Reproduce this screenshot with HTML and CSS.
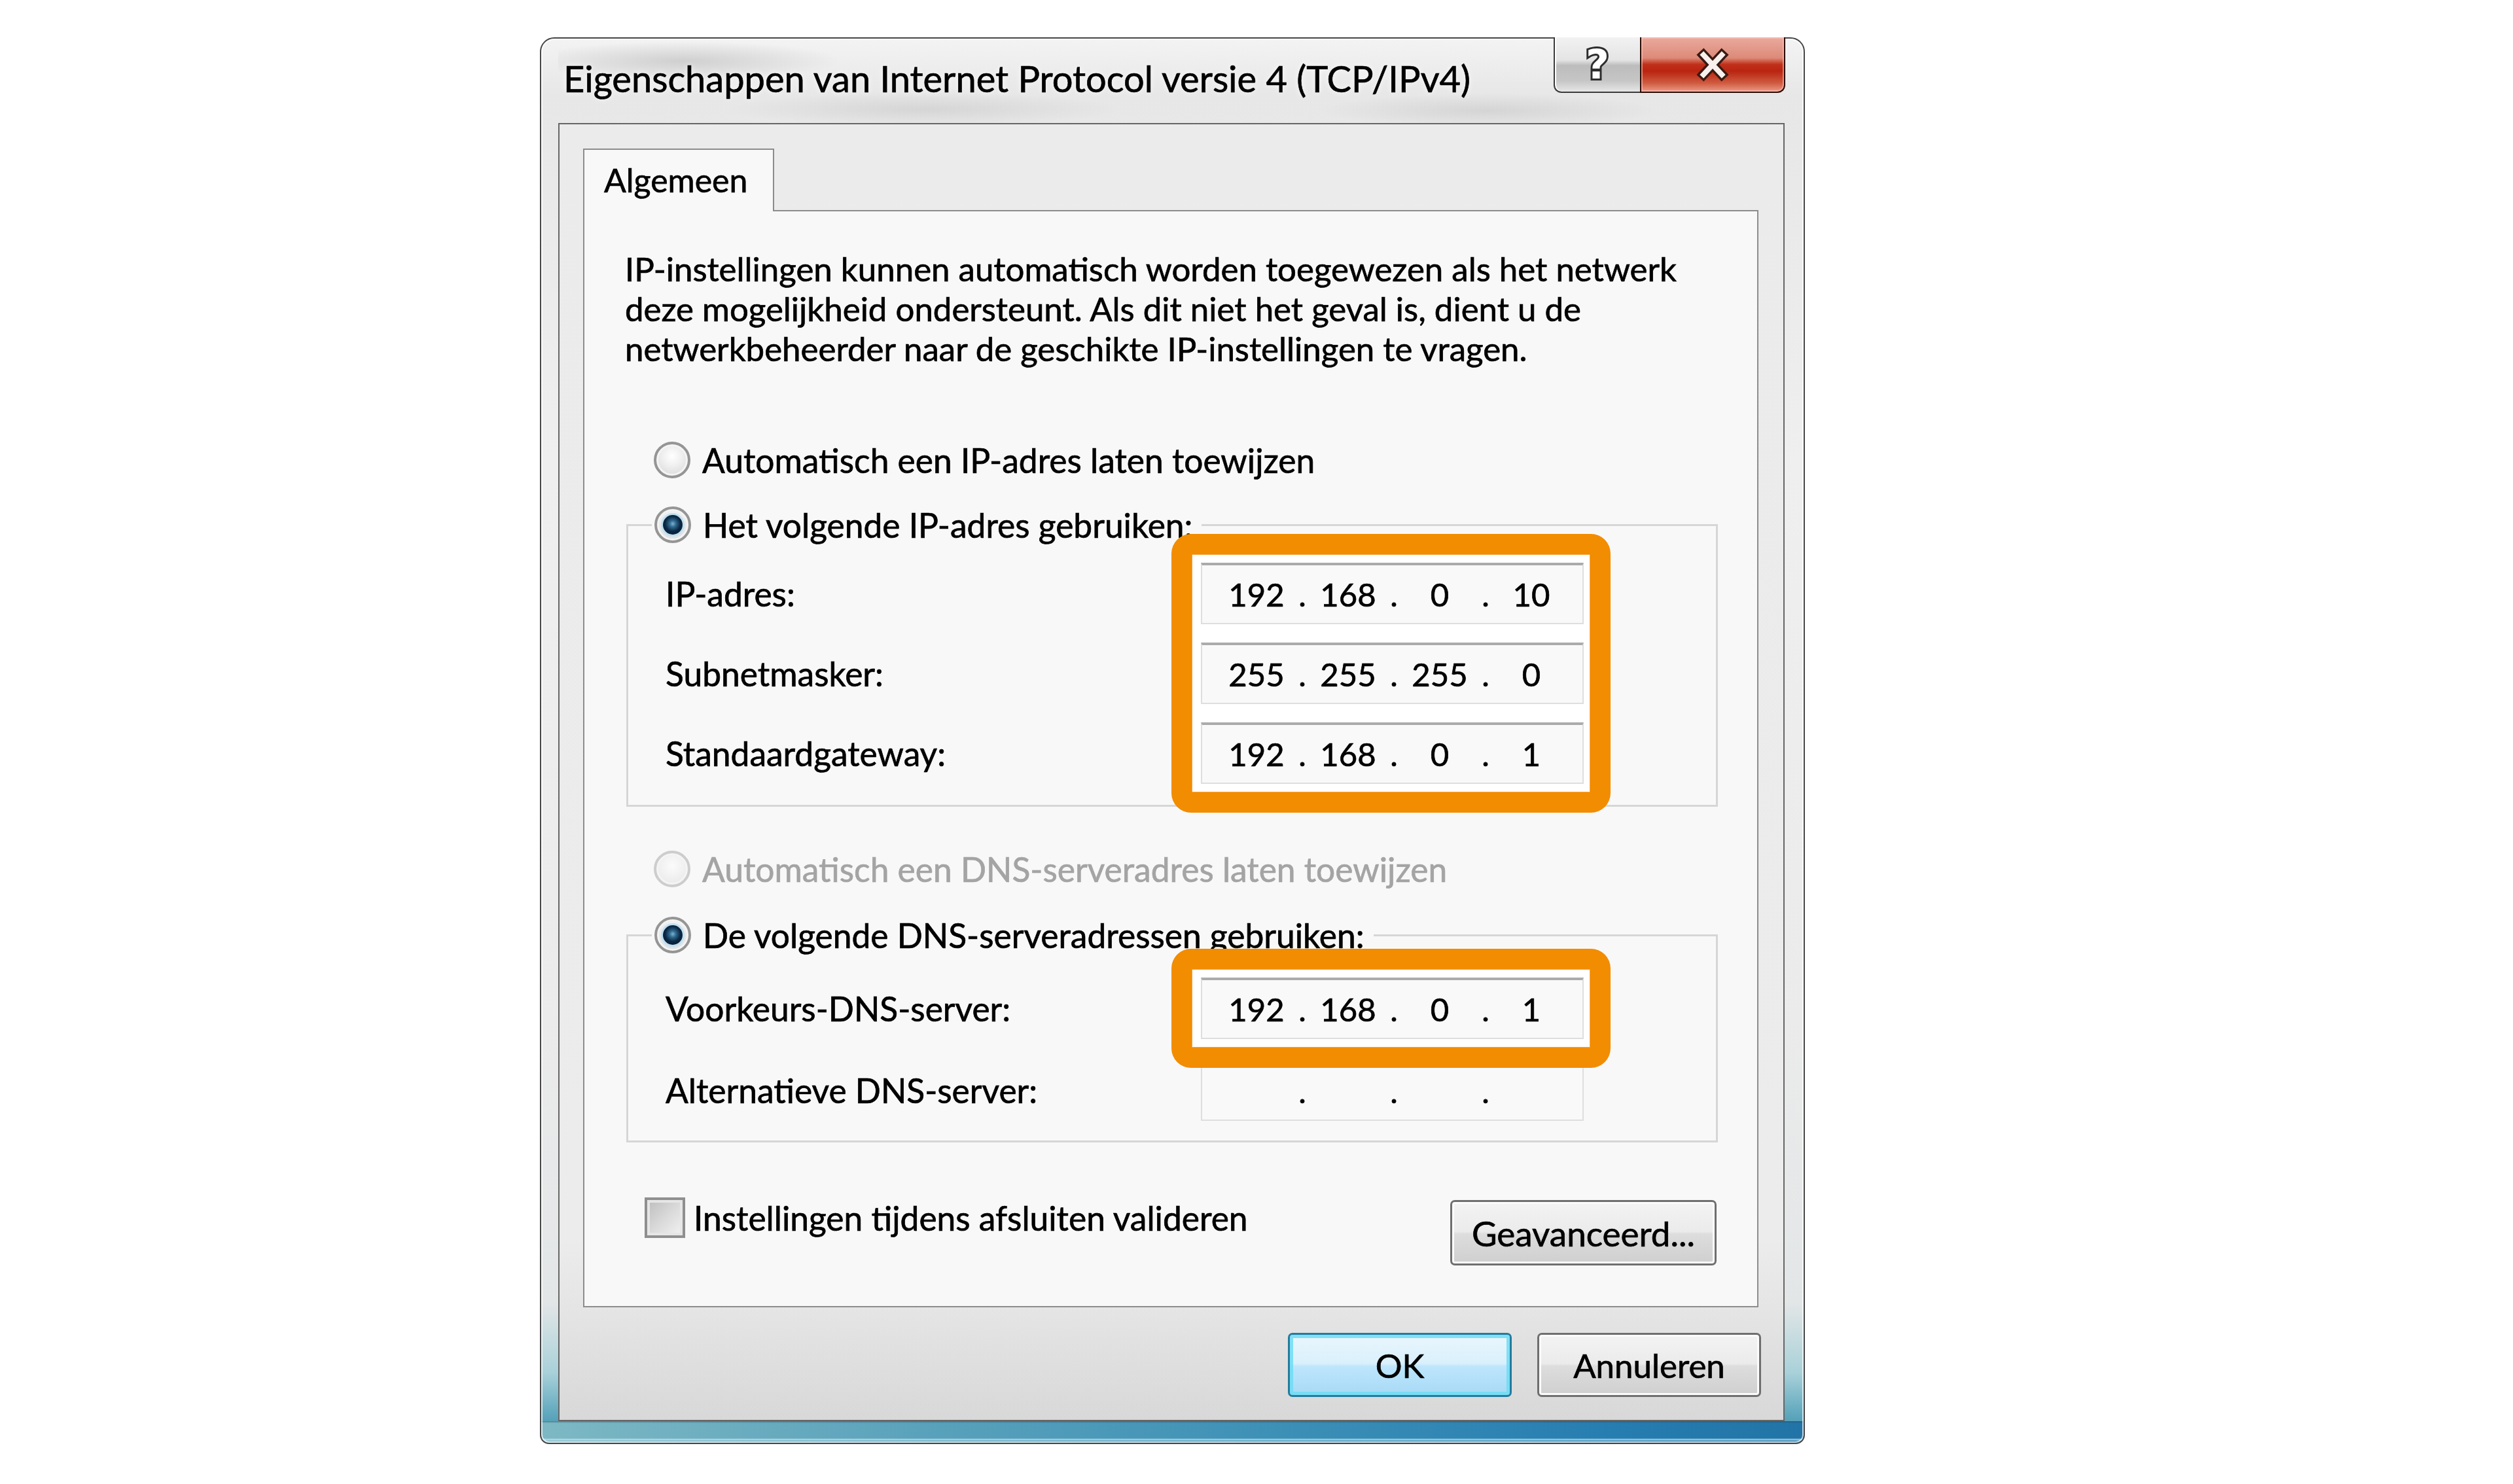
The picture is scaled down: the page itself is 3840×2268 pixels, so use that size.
FILE: index.html
```html
<!DOCTYPE html>
<html lang="nl">
<head>
<meta charset="utf-8">
<title>Eigenschappen van Internet Protocol versie 4 (TCP/IPv4)</title>
<link rel="stylesheet" href="styles.css">
</head>
<body>
<div class="dialog">
  <div class="titlebar">
    <div class="title">Eigenschappen van Internet Protocol versie 4 (TCP/IPv4)</div>
    <div class="caption-btns">
      <div class="cbtn help"><span class="qmark">?</span></div>
      <div class="cbtn close">
        <svg width="60" height="60" viewBox="-30 -30 60 60" aria-hidden="true">
          <path d="M-14 -15 L14 15 M14 -15 L-14 15" stroke="#3a1a12" stroke-width="15" stroke-linecap="square" fill="none"/>
          <path d="M-14 -15 L14 15 M14 -15 L-14 15" stroke="#f7f1ee" stroke-width="8" stroke-linecap="square" fill="none"/>
        </svg>
      </div>
    </div>
  </div>
  <div class="client">
    <div class="tabs"><div class="tab">Algemeen</div></div>
    <div class="panel">
      <p class="desc">IP-instellingen kunnen automatisch worden toegewezen als het netwerk<br>deze mogelijkheid ondersteunt. Als dit niet het geval is, dient u de<br>netwerkbeheerder naar de geschikte IP-instellingen te vragen.</p>

      <div class="opt opt-ip"><span class="radio"></span><span>Automatisch een IP-adres laten toewijzen</span></div>

      <fieldset class="group group-ip">
        <legend class="opt"><span class="radio on"></span><span>Het volgende IP-adres gebruiken:</span></legend>
        <div class="rows">
          <div class="labels">
            <div class="lbl">IP-adres:</div>
            <div class="lbl">Subnetmasker:</div>
            <div class="lbl">Standaardgateway:</div>
          </div>
          <div class="fields hl">
            <div class="ipfield"><span>192</span><i>.</i><span>168</span><i>.</i><span>0</span><i>.</i><span>10</span></div>
            <div class="ipfield"><span>255</span><i>.</i><span>255</span><i>.</i><span>255</span><i>.</i><span>0</span></div>
            <div class="ipfield"><span>192</span><i>.</i><span>168</span><i>.</i><span>0</span><i>.</i><span>1</span></div>
          </div>
        </div>
      </fieldset>

      <div class="opt opt-dns disabled"><span class="radio off"></span><span>Automatisch een DNS-serveradres laten toewijzen</span></div>

      <fieldset class="group group-dns">
        <legend class="opt"><span class="radio on"></span><span>De volgende DNS-serveradressen gebruiken:</span></legend>
        <div class="rows">
          <div class="labels">
            <div class="lbl">Voorkeurs-DNS-server:</div>
            <div class="lbl">Alternatieve DNS-server:</div>
          </div>
          <div class="fields">
            <div class="hl">
              <div class="ipfield"><span>192</span><i>.</i><span>168</span><i>.</i><span>0</span><i>.</i><span>1</span></div>
            </div>
            <div class="ipfield"><span></span><i>.</i><span></span><i>.</i><span></span><i>.</i><span></span></div>
          </div>
        </div>
      </fieldset>

      <div class="bottomrow">
        <div class="check"><span class="checkbox"></span><span>Instellingen tijdens afsluiten valideren</span></div>
        <div class="btn adv">Geavanceerd...</div>
      </div>
    </div>
    <div class="footer">
      <div class="btn dlg default">OK</div>
      <div class="btn dlg">Annuleren</div>
    </div>
  </div>
</div>
</body>
</html>
```
FILE: styles.css
```css
html, body {
  margin: 0;
  background: #ffffff;
}
body {
  font-family: Lato, "Open Sans", "Noto Sans", sans-serif;
  color: #000;
  font-size: 51px;
  -webkit-text-stroke: 0.7px currentColor;
}

.dialog {
  box-sizing: border-box;
  margin: 57px 0 0 825px;
  width: 1933px;
  height: 2150px;
  border: 2px solid #474747;
  border-radius: 22px 22px 14px 14px;
  padding: 0 29px 33px 26px;
  display: flex;
  flex-direction: column;
  background:
    linear-gradient(180deg, rgba(40,70,90,0.55) 0px, rgba(40,70,90,0) 3px, rgba(255,255,255,0) 26px, rgba(200,235,245,0.8) 28px, rgba(200,235,245,0) 31px) left bottom / 100% 33px no-repeat,
    linear-gradient(90deg, #7db8c4 0%, #5aa2bb 30%, #3b8fb6 60%, #267db0 85%, #2274a6 100%) left bottom / 100% 33px no-repeat,
    linear-gradient(180deg, #f3f3f3 0%, #e7e7e7 4%, #efefef 30%, #ebebeb 70%, #e3e6e7 90%, #a9d1d9 95%, #5ea7bd 98%, #3e88a6 100%);
  box-shadow: inset 0 0 0 2px rgba(255,255,255,0.7);
}

/* title bar */
.titlebar {
  height: 129px;
  flex: none;
  display: flex;
  align-items: flex-start;
  justify-content: space-between;
  background:
    radial-gradient(ellipse 240px 30px at 190px 34px, rgba(150,150,150,0.35), rgba(150,150,150,0) 100%),
    radial-gradient(ellipse 300px 26px at 560px 108px, rgba(160,160,160,0.25), rgba(160,160,160,0) 100%),
    radial-gradient(ellipse 260px 26px at 1420px 110px, rgba(170,170,170,0.3), rgba(170,170,170,0) 100%);
}
.title {
  margin: 30px 0 0 8px;
  line-height: 62px;
  font-size: 56px;
  text-shadow: 0 0 10px rgba(255,255,255,0.9);
}
.caption-btns {
  display: flex;
  margin: -2px -1px 0 0;
}
.cbtn {
  box-sizing: border-box;
  height: 85px;
  display: flex;
  align-items: center;
  justify-content: center;
  border: 2px solid #3a3a3a;
  border-top: none;
  -webkit-text-stroke: 0;
}
.help {
  width: 132px;
  border-right: none;
  border-radius: 0 0 0 12px;
  background: linear-gradient(180deg, #f2f2f2 0%, #e4e4e4 42%, #bcbcbc 52%, #c6c6c6 80%, #e6e6e6 100%);
  box-shadow: inset 2px 0 0 #fff;
}
.qmark {
  font-family: "DejaVu Sans", sans-serif;
  font-weight: bold;
  font-size: 62px;
  line-height: 1;
  color: #ffffff;
  -webkit-text-stroke: 6px #2d2d2d;
  paint-order: stroke fill;
}
.close {
  width: 222px;
  border-color: #2a0c06;
  border-radius: 0 0 12px 0;
  background: linear-gradient(180deg, #e9aa9d 0%, #dd8a78 38%, #c0301a 50%, #b92410 62%, #cf5a3f 84%, #eb9a86 100%);
  box-shadow: inset 0 0 0 2px rgba(255,200,190,0.55);
}

/* client area */
.client {
  flex: 1;
  display: flex;
  flex-direction: column;
  border: 2px solid #666666;
  background: linear-gradient(180deg, #ebebeb 0%, #ececec 86%, #e4e4e4 92%, #d8d8d8 100%);
  padding: 37px 38px 0 36px;
  min-height: 0;
}

.tabs {
  display: flex;
  flex: none;
}
.tab {
  position: relative;
  z-index: 1;
  box-sizing: border-box;
  width: 292px;
  height: 96px;
  margin-bottom: -2px;
  padding: 18px 0 0 30px;
  line-height: 56px;
  font-size: 50px;
  border: 2px solid #8c8c8c;
  border-bottom: none;
  background: #f8f8f8;
}

.panel {
  flex: 1;
  border: 2px solid #8c8c8c;
  background: #f8f8f8;
  min-height: 0;
}

.desc {
  margin: 57px 0 0 62px;
  line-height: 61px;
  font-size: 51px;
}

.opt {
  display: flex;
  align-items: center;
  gap: 18px;
  height: 60px;
  font-size: 51.5px;
}
.opt-ip {
  margin: 110px 0 0 106px;
}
.opt-dns {
  margin: 65px 0 0 106px;
}
.disabled {
  color: #a4a4a4;
}

.radio {
  flex: none;
  box-sizing: border-box;
  position: relative;
  width: 56px;
  height: 56px;
  border-radius: 50%;
  border: 4px solid #959595;
  background: radial-gradient(circle at 50% 38%, #ffffff 0%, #f1f1f1 35%, #d3d3d3 100%);
  box-shadow: inset 0 0 0 3px #f4f4f4;
}
.radio.on::after {
  content: "";
  position: absolute;
  inset: 9px;
  border-radius: 50%;
  background: radial-gradient(circle at 50% 45%, #7eb2cf 0%, #2f6a90 22%, #0b2743 52%, #07182b 100%);
  box-shadow: 0 0 0 3px #bfe0f2;
}
.radio.off {
  border-color: #cdcdcd;
  background: radial-gradient(circle at 50% 40%, #fbfbfb 0%, #eeeeee 60%, #e2e2e2 100%);
}

.group {
  margin: 39px 60px 0 64px;
  padding: 28px 202px 32px 36px;
  border: 3px solid #d6d6d6;
  min-inline-size: 0;
}
.group-ip {
  margin-top: 39px;
}
.group-dns {
  margin-top: 41px;
  padding-top: 35px;
  padding-bottom: 30px;
}
.group legend {
  padding: 0 14px 0 4px;
}

.rows {
  display: flex;
}
.labels {
  flex: 1;
  padding-left: 21px;
  display: flex;
  flex-direction: column;
  gap: 28px;
}
.lbl {
  height: 94px;
  display: flex;
  align-items: center;
  font-size: 51.5px;
}
.fields {
  width: 585px;
  display: flex;
  flex-direction: column;
  gap: 28px;
}
.group-dns .fields,
.group-dns .labels {
  gap: 31px;
}

.hl {
  position: relative;
  z-index: 0;
}
.hl::before {
  content: "";
  position: absolute;
  top: -44px;
  right: -41px;
  bottom: -44px;
  left: -45px;
  z-index: -1;
  border: 31px solid #f28c00;
  border-radius: 30px;
  background: #ffffff;
  box-shadow: inset 0 0 0 1px #f5a540;
}

.ipfield {
  box-sizing: border-box;
  height: 94px;
  display: grid;
  grid-template-columns: 110px 30px 110px 30px 110px 30px 110px;
  align-items: center;
  padding-left: 28px;
  border: 2px solid #dedede;
  border-top: 4px solid #ababab;
  background: #f9f9f9;
  font-size: 49px;
  line-height: 1;
}
.ipfield span {
  text-align: center;
}
.ipfield i {
  font-style: normal;
  text-align: center;
}

.bottomrow {
  display: flex;
  justify-content: space-between;
  align-items: flex-start;
  margin: 84px 62px 0 92px;
}
.check {
  display: flex;
  align-items: center;
  gap: 13px;
  height: 62px;
  font-size: 51.5px;
}
.checkbox {
  flex: none;
  box-sizing: border-box;
  width: 62px;
  height: 62px;
  border: 4px solid #8f8f8f;
  background: linear-gradient(135deg, #bdbdbd 0%, #d9d9d9 50%, #f3f3f3 100%);
  box-shadow: inset 0 0 0 4px #e6e6e6;
}

.btn {
  box-sizing: border-box;
  display: flex;
  align-items: center;
  justify-content: center;
  border: 3px solid #6f6f6f;
  border-radius: 7px;
  background: linear-gradient(180deg, #f3f3f3 0%, #ebebeb 48%, #dddddd 52%, #cfcfcf 100%);
  box-shadow: inset 0 0 0 3px #fbfbfb;
  font-size: 51px;
}
.adv {
  width: 407px;
  height: 100px;
  margin-top: 4px;
  font-size: 53px;
}

.footer {
  flex: none;
  height: 172px;
  box-sizing: border-box;
  padding-top: 39px;
  margin-right: -4px;
  display: flex;
  justify-content: flex-end;
  align-items: flex-start;
  gap: 39px;
}
.dlg {
  width: 342px;
  height: 98px;
}
.default {
  border-color: #237c9d;
  background: linear-gradient(180deg, #eaf6fd 0%, #d9f0fc 48%, #bee6fd 52%, #a7d9f5 100%);
  box-shadow: inset 0 0 0 5px rgba(110, 220, 245, 0.85);
}
```
